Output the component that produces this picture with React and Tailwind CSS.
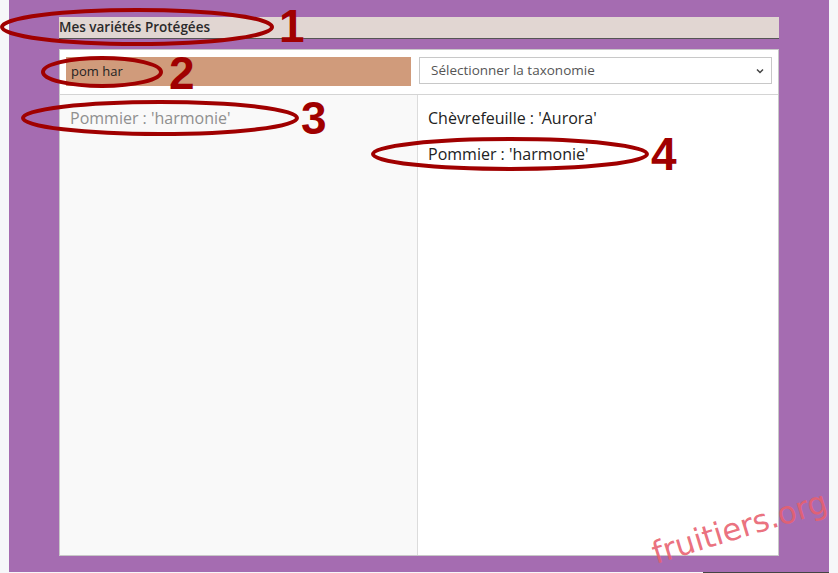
export default function App() {
  const font = { fontFamily: "'Open Sans', 'Noto Sans', sans-serif" };
  return (
    <div className="relative w-[838px] h-[573px] bg-[#f6f7f9] overflow-hidden" style={font}>
      <div className="ml-[9px] w-[820px] h-[572px] bg-[#a56cb1] pt-[17px] pl-[50px]">
        <div className="w-[720px] h-[22px] bg-[#e1d6d2] border-b border-[#555] flex items-center">
          <span className="text-[13.5px] font-semibold text-[#2a2a2a] leading-none">Mes variétés Protégées</span>
        </div>
        <div className="mt-[10px] w-[720px] h-[507px] bg-white border border-[#c8c8c8] flex flex-col">
          <div className="flex gap-[8px] px-[6px] pt-[7px] pb-[8px] border-b border-[#d4d4d4]">
            <div className="w-[345px] h-[29px] bg-[#d09b7b] flex items-center pl-[5px] text-[13px] text-[#222]">pom har</div>
            <div className="flex-1 h-[27px] border border-[#c8c8c8] flex items-center justify-between pl-[11px] pr-[6px] text-[13.5px] text-[#555]">
              <span>Sélectionner la taxonomie</span>
              <svg width="10" height="10" viewBox="0 0 10 10"><path d="M2 3.5 L5 6.5 L8 3.5" stroke="#444" strokeWidth="1.5" fill="none" /></svg>
            </div>
          </div>
          <div className="flex flex-1">
            <div className="w-[358px] bg-[#f9f9f9] border-r border-[#dcdcdc] pl-[10px] pt-[11px] text-[16px] text-[#8f8f8f]">
              Pommier : 'harmonie'
            </div>
            <div className="flex-1 pl-[10px] pt-[11px] text-[16px] text-[#222] flex flex-col gap-[12px]">
              <div>Chèvrefeuille : 'Aurora'</div>
              <div>Pommier : 'harmonie'</div>
            </div>
          </div>
        </div>
      </div>
      <div className="absolute left-[703px] top-[572px] w-[126px] h-[1px] bg-[#444]" />
      <svg className="absolute left-0 top-0" width="838" height="573">
        <g fill="none" stroke="#a00000" strokeWidth="4">
          <ellipse cx="137" cy="27" rx="135" ry="17" />
          <ellipse cx="102" cy="72" rx="59" ry="14" />
          <ellipse cx="160" cy="118" rx="137" ry="16" />
          <ellipse cx="510" cy="154" rx="137" ry="15" />
        </g>
        <g fill="#a00000" fontFamily="'Liberation Sans', sans-serif" fontWeight="bold" fontSize="46">
          <text x="279" y="42">1</text>
          <text x="169" y="89">2</text>
          <text x="301" y="134">3</text>
          <text x="651" y="170">4</text>
        </g>
        <text x="656" y="564" transform="rotate(-17 656 564)" fill="#e8606e" fillOpacity="0.9" fontFamily="'DejaVu Sans', sans-serif" fontSize="31">fruitiers.org</text>
      </svg>
    </div>
  );
}
